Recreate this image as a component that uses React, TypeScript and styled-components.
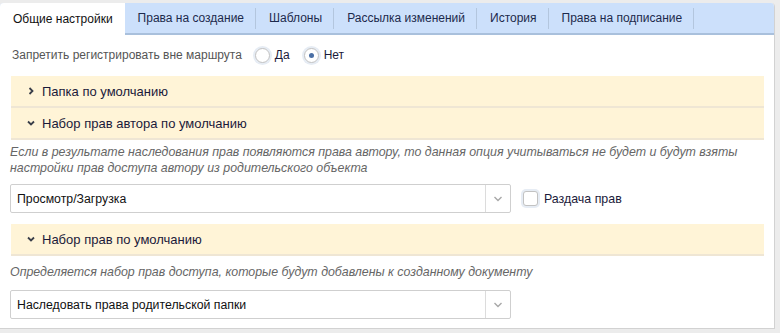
import { useState } from 'react'
import styled, { createGlobalStyle } from 'styled-components'

const GlobalStyle = createGlobalStyle`
  body {
    margin: 0;
    background: #ececec;
    font-family: 'Liberation Sans', Arial, sans-serif;
  }
`

const tabs = ['Общие настройки', 'Права на создание', 'Шаблоны', 'Рассылка изменений', 'История', 'Права на подписание']

const Chevron = ({ open }: { open: boolean }) => (
  <svg width='10' height='10' viewBox='0 0 10 10'>
    {open ? (
      <polyline points='2,3.5 5,6.5 8,3.5' fill='none' stroke='#3a3f4a' strokeWidth='1.8' />
    ) : (
      <polyline points='3.5,2 6.5,5 3.5,8' fill='none' stroke='#3a3f4a' strokeWidth='1.8' />
    )}
  </svg>
)

const Select = ({ value }: { value: string }) => (
  <SelectBox>
    <span>{value}</span>
    <SelectArrow>
      <svg width='10' height='8' viewBox='0 0 10 8'>
        <polyline points='1.5,2 5,5.5 8.5,2' fill='none' stroke='#a8a8a8' strokeWidth='1.4' />
      </svg>
    </SelectArrow>
  </SelectBox>
)

const App = () => {
  const [active, setActive] = useState(0)
  const [forbid, setForbid] = useState(false)

  return (
    <>
      <GlobalStyle />
      <Panel>
        <TabBar>
          {tabs.map((t, i) => (
            <Tab key={t} $active={i === active} onClick={() => setActive(i)}>
              {t}
            </Tab>
          ))}
        </TabBar>
        <Content>
          <OptionRow>
            <Label>Запретить регистрировать вне маршрута</Label>
            <RadioItem onClick={() => setForbid(true)}>
              <Radio $checked={forbid} />
              Да
            </RadioItem>
            <RadioItem onClick={() => setForbid(false)}>
              <Radio $checked={!forbid} />
              Нет
            </RadioItem>
          </OptionRow>

          <SectionHeader $gap={11}>
            <Chevron open={false} />
            Папка по умолчанию
          </SectionHeader>
          <SectionHeader $gap={0}>
            <Chevron open />
            Набор прав автора по умолчанию
          </SectionHeader>
          <Hint $gap={4}>
            Если в результате наследования прав появляются права автору, то данная опция учитываться не будет и будут взяты
            настройки прав доступа автору из родительского объекта
          </Hint>
          <FieldRow $gap={8}>
            <Select value='Просмотр/Загрузка' />
            <CheckItem>
              <CheckBox />
              Раздача прав
            </CheckItem>
          </FieldRow>

          <SectionHeader $gap={11}>
            <Chevron open />
            Набор прав по умолчанию
          </SectionHeader>
          <Hint $gap={8}>Определяется набор прав доступа, которые будут добавлены к созданному документу</Hint>
          <FieldRow $gap={10}>
            <Select value='Наследовать права родительской папки' />
          </FieldRow>
        </Content>
      </Panel>
    </>
  )
}

export default App

const Panel = styled.div`
  margin-top: 3px;
  width: 774px;
  background: #fff;
  border-right: 1px solid #d2d2d2;
  border-bottom: 1px solid #d2d2d2;
  border-radius: 4px 4px 0 0;
  overflow: hidden;
`

const TabBar = styled.div`
  display: flex;
  align-items: stretch;
  height: 30px;
  background: #cce0fb;
  border-bottom: 2px solid #a9c0dc;
`

const Tab = styled.div<{ $active: boolean }>`
  position: relative;
  display: flex;
  align-items: center;
  padding: 0 12px 0 13px;
  font-size: 12px;
  color: ${({ $active }) => ($active ? '#111' : '#1d2a4c')};
  background: ${({ $active }) => ($active ? '#fff' : 'transparent')};
  margin-bottom: ${({ $active }) => ($active ? '-2px' : '0')};
  cursor: pointer;

  &::after {
    content: '';
    position: absolute;
    right: 0;
    top: 5px;
    bottom: 4px;
    width: 1px;
    background: ${({ $active }) => ($active ? 'transparent' : '#b3c6de')};
  }
`

const Content = styled.div`
  padding: 10px 10px 9px 10px;
`

const OptionRow = styled.div`
  display: flex;
  align-items: center;
  height: 20px;
  padding-left: 2px;
  font-size: 12px;
`

const Label = styled.span`
  color: #555;
  margin-right: 13px;
`

const RadioItem = styled.label`
  display: flex;
  align-items: center;
  gap: 5px;
  font-size: 12px;
  color: #1b1a3a;
  margin-right: 14px;
  cursor: pointer;
`

const Radio = styled.span<{ $checked: boolean }>`
  position: relative;
  box-sizing: border-box;
  width: 15px;
  height: 15px;
  border-radius: 50%;
  border: 1px solid #c2c2c2;
  background: #fff;
  box-shadow: 0 0 0 2px #e6ecf4;

  &::after {
    content: '';
    display: ${({ $checked }) => ($checked ? 'block' : 'none')};
    position: absolute;
    left: 4px;
    top: 4px;
    width: 5px;
    height: 5px;
    border-radius: 50%;
    background: #4a6fa5;
  }
`

const SectionHeader = styled.div<{ $gap: number }>`
  display: flex;
  align-items: center;
  gap: 6px;
  height: 30px;
  margin: ${({ $gap }) => $gap}px 0 0 1px;
  padding-left: 15px;
  background: #fff4d7;
  border-bottom: 2px solid #efe6d4;
  font-size: 13px;
  color: #1b1a3a;
`

const Hint = styled.div<{ $gap: number }>`
  margin-top: ${({ $gap }) => $gap}px;
  font-size: 12.4px;
  line-height: 16px;
  font-style: italic;
  color: #666;
`

const FieldRow = styled.div<{ $gap: number }>`
  display: flex;
  align-items: center;
  margin-top: ${({ $gap }) => $gap}px;
`

const SelectBox = styled.div`
  display: flex;
  align-items: center;
  box-sizing: border-box;
  width: 501px;
  height: 29px;
  border: 1px solid #cfcfcf;
  border-radius: 2px;
  background: #fff;
  font-size: 12.3px;
  color: #111;

  span {
    flex: 1;
    padding-left: 6px;
  }
`

const SelectArrow = styled.div`
  display: flex;
  align-items: center;
  justify-content: center;
  width: 24px;
  height: 100%;
  border-left: 1px solid #dcdcdc;
`

const CheckItem = styled.label`
  display: flex;
  align-items: center;
  gap: 6px;
  margin-left: 12px;
  font-size: 12.4px;
  color: #1b1a3a;
`

const CheckBox = styled.span`
  box-sizing: border-box;
  width: 15px;
  height: 15px;
  border: 1px solid #c2c2c2;
  border-radius: 3px;
  background: #fff;
  box-shadow: 0 0 0 2px #e6ecf4;
`
